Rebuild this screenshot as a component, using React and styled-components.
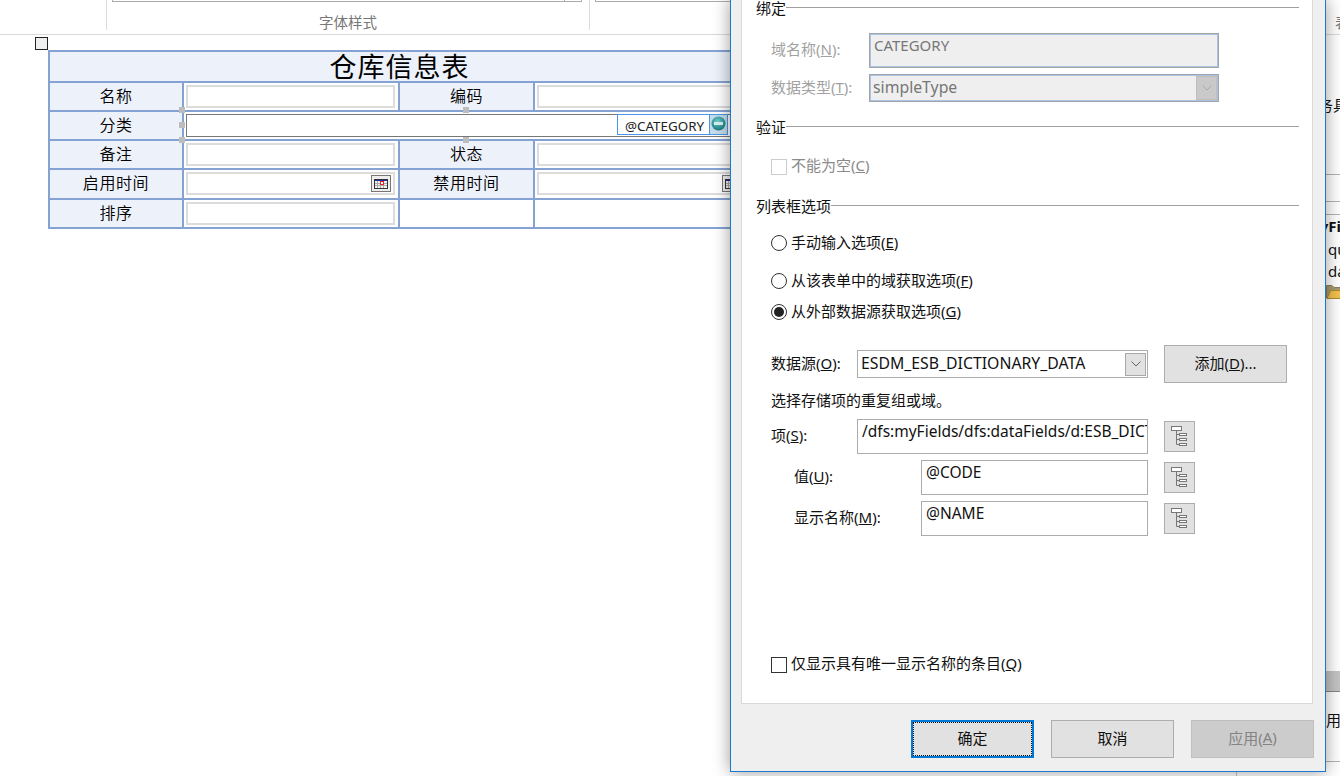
import React from 'react'
import styled, { createGlobalStyle } from 'styled-components'

const GlobalStyle = createGlobalStyle`
  html, body {
    margin: 0;
    padding: 0;
    overflow: hidden;
    background: #fff;
  }
  * { box-sizing: border-box; }
`

const sans = `"Noto Sans", "Noto Sans CJK SC", sans-serif`

function TreeIcon() {
  return (
    <svg width="29" height="29" viewBox="1 1 29 29" fill="none" stroke="#777" strokeWidth="1">
      <rect x="7.5" y="5.5" width="10" height="4" fill="#fff" />
      <path d="M12.5 9.5V23.5M12.5 13.5H15.5M12.5 18.5H15.5M12.5 23.5H15.5" />
      <rect x="15.5" y="12.5" width="7" height="2" fill="#fff" />
      <rect x="15.5" y="17.5" width="7" height="2" fill="#fff" />
      <rect x="15.5" y="22.5" width="7" height="2" fill="#fff" />
    </svg>
  )
}

function Chevron({ color }) {
  return (
    <svg width="10" height="6" viewBox="0 0 10 6" fill="none" stroke={color} strokeWidth="1">
      <path d="M0.5 0.5L5 5L9.5 0.5" />
    </svg>
  )
}

function CalendarIcon() {
  return (
    <svg width="14" height="10" viewBox="0 0 14 10">
      <rect x="0" y="0" width="14" height="10" fill="#333" />
      <rect x="1" y="1" width="12" height="1" fill="#1c2aa8" />
      <rect x="1" y="2" width="12" height="7" fill="#f2f2f2" />
      <path d="M1 4.5H13M1 6.5H13M3.5 2V9M6.5 2V9M9.5 2V9" stroke="#aaa" strokeWidth="1" fill="none" />
      <rect x="6.5" y="2.5" width="3" height="3" fill="#fff" stroke="#e22" strokeWidth="1" />
    </svg>
  )
}

function RemoveIcon() {
  return (
    <svg width="15" height="15" viewBox="0 0 15 15">
      <defs>
        <radialGradient id="teal" cx="45%" cy="35%" r="70%">
          <stop offset="0%" stopColor="#6fd0cc" />
          <stop offset="100%" stopColor="#11757c" />
        </radialGradient>
      </defs>
      <circle cx="7.5" cy="7.5" r="7" fill="url(#teal)" />
      <rect x="3" y="6" width="9" height="3" fill="#d9f0f0" />
    </svg>
  )
}

function FolderIcon() {
  return (
    <svg width="20" height="15" viewBox="0 0 20 15">
      <path d="M0.5 14V1.5H6L8 3.5H18V14Z" fill="#a89a70" stroke="#8a8060" />
      <path d="M1 14.5L4.5 6.5H20L17 14.5Z" fill="#f2c14e" stroke="#b08a2a" />
    </svg>
  )
}

export default function App() {
  return (
    <Page>
      <GlobalStyle />
      <Ribbon>
        <RibbonGroup $w={107} />
        <RibbonGroup $w={483}>
          <Gallery>
            <GalleryArrow />
          </Gallery>
          <GroupLabel>字体样式</GroupLabel>
        </RibbonGroup>
        <NextGallery />
        <RibbonEdge>表</RibbonEdge>
      </Ribbon>

      <Body>
        <FormArea>
          <TableHandle />
          <FormTable>
            <TitleCell>仓库信息表</TitleCell>

            <LabelCell>名称</LabelCell>
            <InputCell><PlainInput /></InputCell>
            <LabelCell>编码</LabelCell>
            <InputCell><PlainInput /></InputCell>

            <LabelCell>分类</LabelCell>
            <BoundCell>
              <Handle $x={-5} $y={-5} />
              <Handle $x={-5} $y={10} />
              <Handle $x={-5} $y={25} />
              <Handle $x={279} $y={-5} />
              <Handle $x={279} $y={25} />
              <BoundInput>
                <BindingTag>
                  <TagText>@CATEGORY</TagText>
                  <TagButton><RemoveIcon /></TagButton>
                </BindingTag>
              </BoundInput>
            </BoundCell>

            <LabelCell>备注</LabelCell>
            <InputCell><PlainInput /></InputCell>
            <LabelCell>状态</LabelCell>
            <InputCell><PlainInput /></InputCell>

            <LabelCell>启用时间</LabelCell>
            <InputCell>
              <PlainInput>
                <DateButton><CalendarIcon /></DateButton>
              </PlainInput>
            </InputCell>
            <LabelCell>禁用时间</LabelCell>
            <InputCell>
              <PlainInput>
                <DateButton><CalendarIcon /></DateButton>
              </PlainInput>
            </InputCell>

            <LabelCell>排序</LabelCell>
            <InputCell><PlainInput /></InputCell>
            <InputCell />
            <InputCell />
          </FormTable>
        </FormArea>

        <TaskPane>
          <PaneText $top={60} $left={66}>任务具</PaneText>
          <PaneRule $top={59} />
          <PaneRule $top={26} />
          <PaneRule $top={12} />
          <PaneText $top={1} $left={68} $bold>myFields</PaneText>
          <PaneText $top={3} $left={91}>query</PaneText>
          <PaneText $top={2} $left={91}>dataFields</PaneText>
          <PaneFolder><FolderIcon /></PaneFolder>
          <PaneBar />
          <PaneText $top={18} $left={74}>使用值</PaneText>
          <PaneRule $top={31} />
        </TaskPane>
      </Body>

      <Dialog>
        <Panel>
          <SectionTitle $top={0}>绑定</SectionTitle>
          <Row $top={17} $h={35}>
            <Label $w={98} $off>域名称(<u>N</u>):</Label>
            <ReadOnlyBox>CATEGORY</ReadOnlyBox>
          </Row>
          <Row $top={6} $h={28}>
            <Label $w={98} $off>数据类型(<u>T</u>):</Label>
            <ReadOnlySelect>
              <SelectValue>simpleType</SelectValue>
              <ReadOnlyArrow><Chevron color="#a8a8a8" /></ReadOnlyArrow>
            </ReadOnlySelect>
          </Row>

          <SectionTitle $top={17}>验证</SectionTitle>
          <Row $top={23} $h={17}>
            <CheckBox $off />
            <OptionText $off>不能为空(<u>C</u>)</OptionText>
          </Row>

          <SectionTitle $top={23}>列表框选项</SectionTitle>
          <Row $top={19} $h={20}>
            <Radio />
            <OptionText>手动输入选项(<u>E</u>)</OptionText>
          </Row>
          <Row $top={18} $h={20}>
            <Radio />
            <OptionText>从该表单中的域获取选项(<u>F</u>)</OptionText>
          </Row>
          <Row $top={11} $h={20}>
            <Radio $on />
            <OptionText>从外部数据源获取选项(<u>G</u>)</OptionText>
          </Row>

          <Row $top={23} $h={38}>
            <Label $w={86}>数据源(<u>O</u>):</Label>
            <SourceSelect>
              <SelectValue>ESDM_ESB_DICTIONARY_DATA</SelectValue>
              <SelectArrow><Chevron color="#666" /></SelectArrow>
            </SourceSelect>
            <AddButton>添加(<u>D</u>)...</AddButton>
          </Row>

          <Caption>选择存储项的重复组或域。</Caption>

          <Row $top={11} $h={35}>
            <Label $w={86}>项(<u>S</u>):</Label>
            <TextBox $w={291}>/dfs:myFields/dfs:dataFields/d:ESB_DICTIONARY_DATA</TextBox>
            <TreeButton><TreeIcon /></TreeButton>
          </Row>
          <Row $top={6} $h={35} $indent>
            <Label $w={127}>值(<u>U</u>):</Label>
            <TextBox $w={227}>@CODE</TextBox>
            <TreeButton><TreeIcon /></TreeButton>
          </Row>
          <Row $top={6} $h={35} $indent>
            <Label $w={127}>显示名称(<u>M</u>):</Label>
            <TextBox $w={227}>@NAME</TextBox>
            <TreeButton><TreeIcon /></TreeButton>
          </Row>

          <Row $top={120} $h={17}>
            <CheckBox />
            <OptionText>仅显示具有唯一显示名称的条目(<u>Q</u>)</OptionText>
          </Row>
        </Panel>
        <DialogFooter>
          <FooterButton $primary>确定</FooterButton>
          <FooterButton>取消</FooterButton>
          <FooterButton $off>应用(<u>A</u>)</FooterButton>
        </DialogFooter>
      </Dialog>
    </Page>
  )
}

const Page = styled.div`
  position: relative;
  width: 1340px;
  height: 776px;
  overflow: hidden;
  background: #fff;
  font-family: ${sans};
  color: #111;
`

const Ribbon = styled.div`
  display: flex;
  height: 35px;
  border-bottom: 1px solid #dadada;
  align-items: flex-start;
`

const RibbonGroup = styled.div`
  width: ${p => p.$w}px;
  height: 30px;
  flex: none;
  border-right: 1px solid #dcdcdc;
  position: relative;
`

const Gallery = styled.div`
  margin-left: 5px;
  width: 470px;
  height: 2px;
  border: 1px solid #ababab;
  border-top: 0;
  display: flex;
  justify-content: flex-end;
`

const GalleryArrow = styled.div`
  width: 17px;
  border-left: 1px solid #ababab;
`

const GroupLabel = styled.div`
  margin-top: 12px;
  text-align: center;
  font-size: 14.5px;
  line-height: 17px;
  color: #777;
`

const NextGallery = styled.div`
  margin-left: 5px;
  width: 200px;
  height: 2px;
  flex: none;
  border-bottom: 1px solid #ababab;
  border-left: 1px solid #ababab;
`

const RibbonEdge = styled.div`
  margin-left: auto;
  margin-top: 14px;
  width: 5px;
  overflow: hidden;
  font-size: 14.5px;
  line-height: 17px;
  color: #777;
`

const Body = styled.div`
  display: flex;
  height: 741px;
`

const FormArea = styled.div`
  flex: 1;
  padding: 2px 0 0 35px;
`

const TableHandle = styled.div`
  width: 13px;
  height: 13px;
  border: 1px solid #222;
  background: #efefef;
`

const FormTable = styled.div`
  margin-left: 13px;
  width: 703px;
  display: grid;
  grid-template-columns: 132px 214px 133px 214px;
  grid-template-rows: 29px 27px 27px 27px 28px 27px;
  gap: 2px;
  padding: 2px;
  background: #84a3d2;
`

const TitleCell = styled.div`
  grid-column: 1 / -1;
  background: #ecf1fa;
  text-align: center;
  font-size: 27px;
  line-height: 27px;
  letter-spacing: 1px;
  color: #000;
  font-family: "Noto Sans CJK SC", sans-serif;
`

const LabelCell = styled.div`
  background: #ecf1fa;
  display: flex;
  align-items: center;
  justify-content: center;
  padding-bottom: 4px;
  font-size: 16px;
  font-weight: 350;
  letter-spacing: 0.6px;
  color: #000;
  font-family: "Noto Sans CJK SC", sans-serif;
`

const InputCell = styled.div`
  background: #fff;
  padding: 2px 3px 2px 2px;
`

const BoundCell = styled.div`
  grid-column: 2 / span 3;
  position: relative;
  background: #fff;
  padding: 2px;
`

const PlainInput = styled.div`
  position: relative;
  height: 23px;
  border: 2px solid #dcdcdc;
  background: #fff;
  display: flex;
  justify-content: flex-end;
  align-items: center;
  padding-right: 2px;
`

const DateButton = styled.div`
  width: 20px;
  height: 17px;
  background: #eee;
  border: 1px solid #777;
  display: flex;
  align-items: center;
  justify-content: center;
`

const BoundInput = styled.div`
  position: relative;
  height: 23px;
  border: 1px solid #777;
`

const BindingTag = styled.div`
  position: absolute;
  left: 430px;
  top: -1px;
  width: 111px;
  height: 21px;
  display: flex;
  background: #fff;
  border: 1px solid #4a97e8;
`

const TagText = styled.div`
  flex: 1;
  padding: 1px 0 0 7px;
  font-size: 13.4px;
  line-height: 21px;
  color: #222;
  white-space: nowrap;
`

const TagButton = styled.div`
  width: 18px;
  background: #c6dcea;
  border-left: 1px solid #4a97e8;
  display: flex;
  justify-content: center;
  padding-top: 1px;
`

const Handle = styled.div`
  position: absolute;
  left: ${p => p.$x}px;
  top: ${p => p.$y}px;
  width: 6px;
  height: 6px;
  background: #bdbdbd;
`

const TaskPane = styled.div`
  width: 104px;
  flex: none;
  border-left: 1px solid #c8c8c8;
  overflow: hidden;
`

const PaneText = styled.div`
  margin-top: ${p => p.$top}px;
  padding-left: ${p => p.$left}px;
  height: 20px;
  font-size: 15px;
  line-height: 20px;
  white-space: nowrap;
  font-weight: ${p => (p.$bold ? 700 : 400)};
  color: #111;
`

const PaneRule = styled.div`
  margin-top: ${p => p.$top}px;
  height: 1px;
  background: #b4b4b4;
`

const PaneFolder = styled.div`
  margin-top: 3px;
  padding-left: 89px;
  height: 14px;
  line-height: 0;
`

const PaneBar = styled.div`
  margin-top: 373px;
  height: 21px;
  background: #c4c4c4;
  border-bottom: 1px solid #888;
`

const Dialog = styled.div`
  position: absolute;
  left: 730px;
  top: -1px;
  width: 596px;
  height: 773px;
  background: #efefef;
  border: 1px solid #1c79cf;
  box-shadow: 0 0 16px rgba(0, 0, 0, 0.4);
  padding: 0 12px 0 10px;
`

const Panel = styled.div`
  height: 704px;
  border: 1px solid #d9d9d9;
  border-top: 0;
  background: #fff;
  padding: 0 13px 0 14px;
  display: flex;
  flex-direction: column;
`

const SectionTitle = styled.div`
  margin-top: ${p => p.$top}px;
  height: 16px;
  flex: none;
  display: flex;
  align-items: center;
  font-size: 15px;
  line-height: 16px;
  white-space: nowrap;
  color: #111;

  &::after {
    content: '';
    flex: 1;
    height: 1px;
    margin-top: -2px;
    background: #a0a0a0;
  }
`

const Row = styled.div`
  margin-top: ${p => p.$top}px;
  height: ${p => p.$h}px;
  flex: none;
  display: flex;
  align-items: center;
  padding-left: ${p => (p.$indent ? 38 : 15)}px;
`

const Label = styled.div`
  width: ${p => p.$w}px;
  flex: none;
  padding-bottom: 4px;
  font-size: 15px;
  white-space: nowrap;
  color: ${p => (p.$off ? '#a2a2a2' : '#111')};
`

const OptionText = styled.div`
  margin-left: 4px;
  padding-bottom: 4px;
  font-size: 15px;
  white-space: nowrap;
  color: ${p => (p.$off ? '#8a8a8a' : '#111')};
`

const CheckBox = styled.div`
  width: 16px;
  height: 16px;
  flex: none;
  border: 1px solid ${p => (p.$off ? '#ccc' : '#333')};
  background: #fff;
`

const Radio = styled.div`
  width: 16px;
  height: 16px;
  flex: none;
  border-radius: 50%;
  border: 1px solid #333;
  background: #fff;
  display: flex;
  align-items: center;
  justify-content: center;

  &::after {
    content: '';
    display: ${p => (p.$on ? 'block' : 'none')};
    width: 10px;
    height: 10px;
    border-radius: 50%;
    background: #222;
  }
`

const ReadOnlyBox = styled.div`
  width: 350px;
  height: 35px;
  background: #efefef;
  border: 1px solid #a4a4a4;
  box-shadow: inset 0 0 0 1px #a9c4e4;
  padding: 1px 4px;
  font-size: 15px;
  line-height: 20px;
  color: #777;
`

const ReadOnlySelect = styled.div`
  width: 350px;
  height: 28px;
  background: #efefef;
  border: 1px solid #a4a4a4;
  box-shadow: inset 0 0 0 1px #a9c4e4;
  padding-left: 3px;
  display: flex;
  align-items: center;
  justify-content: space-between;
  font-size: 15.8px;
  color: #777;
`

const SelectValue = styled.span`
  padding-bottom: 3px;
  white-space: nowrap;
`

const ReadOnlyArrow = styled.div`
  width: 21px;
  height: 24px;
  margin-right: 1px;
  background: #c9c9c9;
  border: 1px solid #bdbdbd;
  display: flex;
  align-items: center;
  justify-content: center;
`

const SourceSelect = styled.div`
  width: 291px;
  height: 28px;
  border: 1px solid #acacac;
  background: #fff;
  padding-left: 3px;
  display: flex;
  align-items: center;
  justify-content: space-between;
  font-size: 15.8px;
  color: #111;
`

const SelectArrow = styled.div`
  width: 21px;
  height: 23px;
  margin-right: 1px;
  background: #e1e1e1;
  border: 1px solid #a8a8a8;
  display: flex;
  align-items: center;
  justify-content: center;
`

const AddButton = styled.div`
  margin-left: 16px;
  width: 123px;
  height: 38px;
  background: #e1e1e1;
  border: 1px solid #adadad;
  display: flex;
  align-items: center;
  justify-content: center;
  padding-bottom: 3px;
  font-size: 15px;
  color: #111;
`

const Caption = styled.div`
  margin-top: 9px;
  padding-left: 15px;
  height: 16px;
  flex: none;
  font-size: 15px;
  line-height: 16px;
  color: #111;
`

const TextBox = styled.div`
  width: ${p => p.$w}px;
  height: 35px;
  flex: none;
  border: 1px solid #acacac;
  background: #fff;
  padding: 1px 4px 0;
  font-size: 15.5px;
  line-height: 20px;
  white-space: nowrap;
  overflow: hidden;
  color: #111;
`

const TreeButton = styled.div`
  margin-left: 16px;
  width: 31px;
  height: 31px;
  flex: none;
  background: #e1e1e1;
  border: 1px solid #adadad;
  line-height: 0;
`

const DialogFooter = styled.div`
  margin-top: 16px;
  margin-right: -1px;
  display: flex;
  justify-content: flex-end;
  gap: 17px;
`

const FooterButton = styled.div`
  position: relative;
  width: 123px;
  height: 38px;
  display: flex;
  align-items: center;
  justify-content: center;
  padding-bottom: 4px;
  font-size: 15px;
  background: ${p => (p.$off ? '#cccccc' : '#e1e1e1')};
  border: ${p => (p.$primary ? '2px solid #0078d7' : `1px solid ${p.$off ? '#bfbfbf' : '#adadad'}`)};
  color: ${p => (p.$off ? '#838383' : '#111')};
  outline: ${p => (p.$primary ? '1px dotted #111' : 'none')};
  outline-offset: -3px;
`
